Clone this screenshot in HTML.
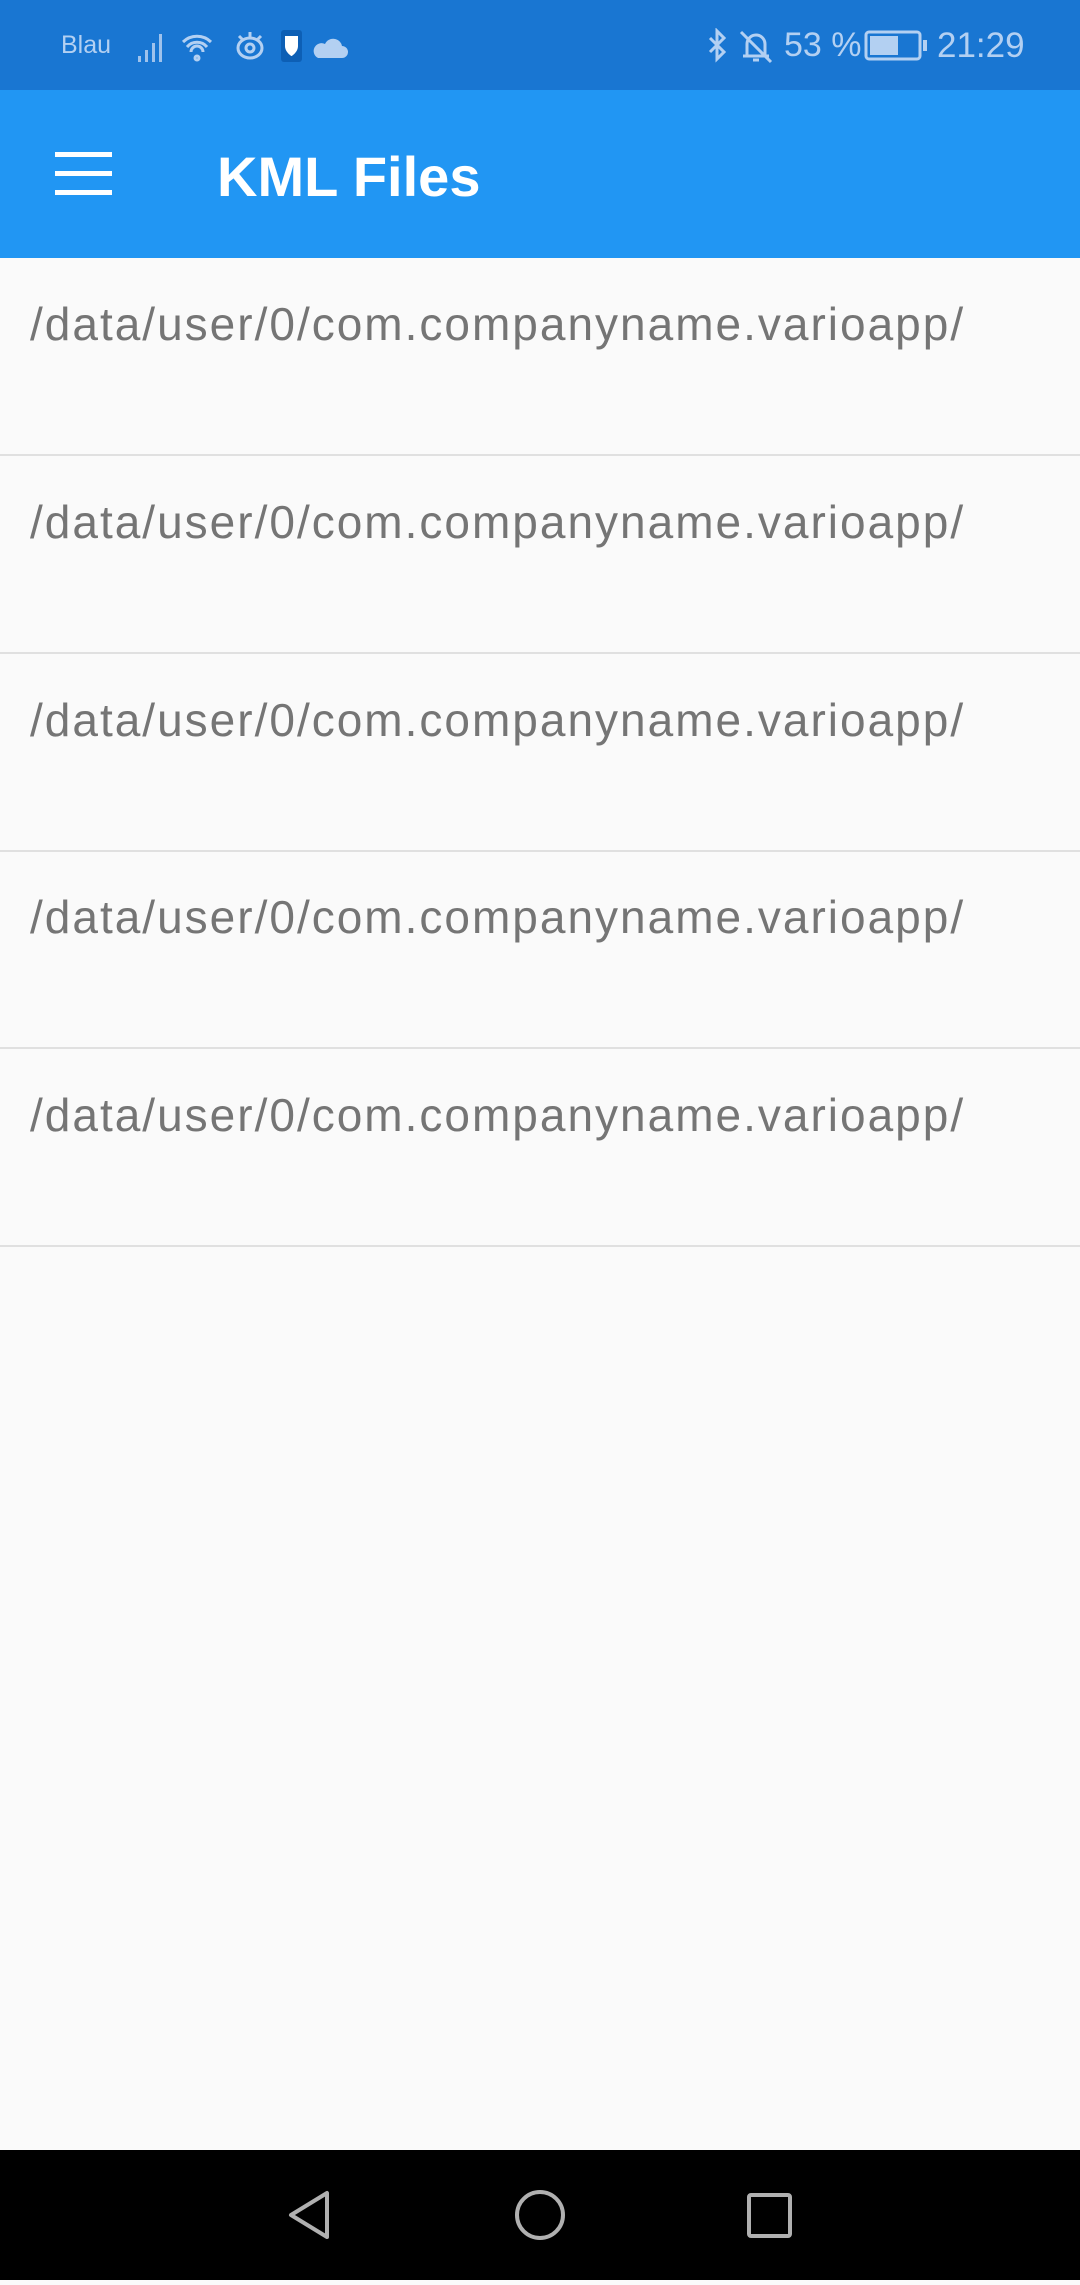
<!DOCTYPE html>
<html><head><meta charset="utf-8"><style>
*{margin:0;padding:0;box-sizing:border-box}
body{width:1080px;height:2280px;background:#fafafa;font-family:"Liberation Sans",sans-serif;position:relative;overflow:hidden}
.sb{position:absolute;left:0;top:0;width:1080px;height:90px;background:#1976D2;color:#b3d0f2}
.ab{position:absolute;left:0;top:90px;width:1080px;height:168px;background:#2196F3}
.row{position:absolute;left:0;width:1080px;height:198px;border-bottom:2px solid #e0e0e0}
.row span{position:absolute;left:30px;top:39px;font-size:46px;color:#757575;white-space:nowrap;letter-spacing:2px}
.nav{position:absolute;left:0;top:2150px;width:1080px;height:130px;background:#000}
</style></head><body>
<div class="sb">
<div style="position:absolute;left:61px;top:31px;font-size:25px">Blau</div>
<svg style="position:absolute;left:135px;top:28px" width="230" height="36" viewBox="0 0 230 36">
<g fill="#9fc2ec"><rect x="3" y="28" width="3" height="6"/><rect x="10" y="22" width="3" height="12"/><rect x="17" y="15" width="3" height="19"/><rect x="24" y="6" width="3" height="28"/></g>
<g fill="none" stroke="#b3d0f2" stroke-width="3"><path d="M48 14a20 20 0 0 1 28 0M52 19a13 13 0 0 1 20 0M56 24a6 6 0 0 1 12 0"/><circle cx="62" cy="30" r="2"/>
<ellipse cx="115" cy="20" rx="12" ry="10"/><circle cx="115" cy="20" r="4"/><path d="M104 8l4 4M126 8l-4 4M115 4v5"/></g>
<rect x="146" y="2" width="21" height="32" rx="3" fill="#0d5fb5"/><path d="M150 8h13v10c0 6-6 10-6.5 10s-6.5-4-6.5-10z" fill="#fff"/>
<path d="M183 30h24a6 6 0 0 0 0-12a9 9 0 0 0-17-2a7 7 0 0 0-7 14z" fill="#b3d0f2"/>
</svg>
<svg style="position:absolute;left:705px;top:28px" width="70" height="38" viewBox="0 0 70 38" fill="none" stroke="#b3d0f2" stroke-width="3">
<path d="M5 10l14 14-7 7V3l7 7-14 14"/>
<path d="M38 28h26M42 28V16a9 9 0 0 1 18 0v12M48 32h6M36 4l30 30"/>
</svg>
<div style="position:absolute;left:784px;top:26px;font-size:34px">53 %</div>
<svg style="position:absolute;left:864px;top:30px" width="66" height="32" viewBox="0 0 66 32"><rect x="2" y="2" width="54" height="27" rx="3" fill="none" stroke="#b3d0f2" stroke-width="3"/><rect x="6" y="6" width="28" height="19" fill="#b3d0f2"/><rect x="59" y="10" width="4" height="11" fill="#b3d0f2"/></svg>
<div style="position:absolute;left:937px;top:26px;font-size:35px">21:29</div>
</div>
<div class="ab">
<div style="position:absolute;left:55px;top:62px;width:57px;height:5px;background:#fff"></div>
<div style="position:absolute;left:55px;top:81px;width:57px;height:5px;background:#fff"></div>
<div style="position:absolute;left:55px;top:100px;width:57px;height:5px;background:#fff"></div>
<div style="position:absolute;left:217px;top:54px;font-size:56px;font-weight:bold;color:#fff">KML Files</div>
</div>
<div class="row" style="top:258px"><span>/data/user/0/com.companyname.varioapp/</span></div>
<div class="row" style="top:456px"><span>/data/user/0/com.companyname.varioapp/</span></div>
<div class="row" style="top:654px"><span>/data/user/0/com.companyname.varioapp/</span></div>
<div class="row" style="top:851px"><span>/data/user/0/com.companyname.varioapp/</span></div>
<div class="row" style="top:1049px"><span>/data/user/0/com.companyname.varioapp/</span></div>
<div class="nav">
<svg width="1080" height="130" viewBox="0 2150 1080 130" fill="none" stroke="#b0b0b0" stroke-width="4" stroke-linejoin="round">
<path d="M327 2193v44l-36-22z"/>
<ellipse cx="540" cy="2215" rx="23" ry="23"/>
<rect x="749" y="2195" width="41" height="41" rx="2"/>
</svg>
</div>
</body></html>
